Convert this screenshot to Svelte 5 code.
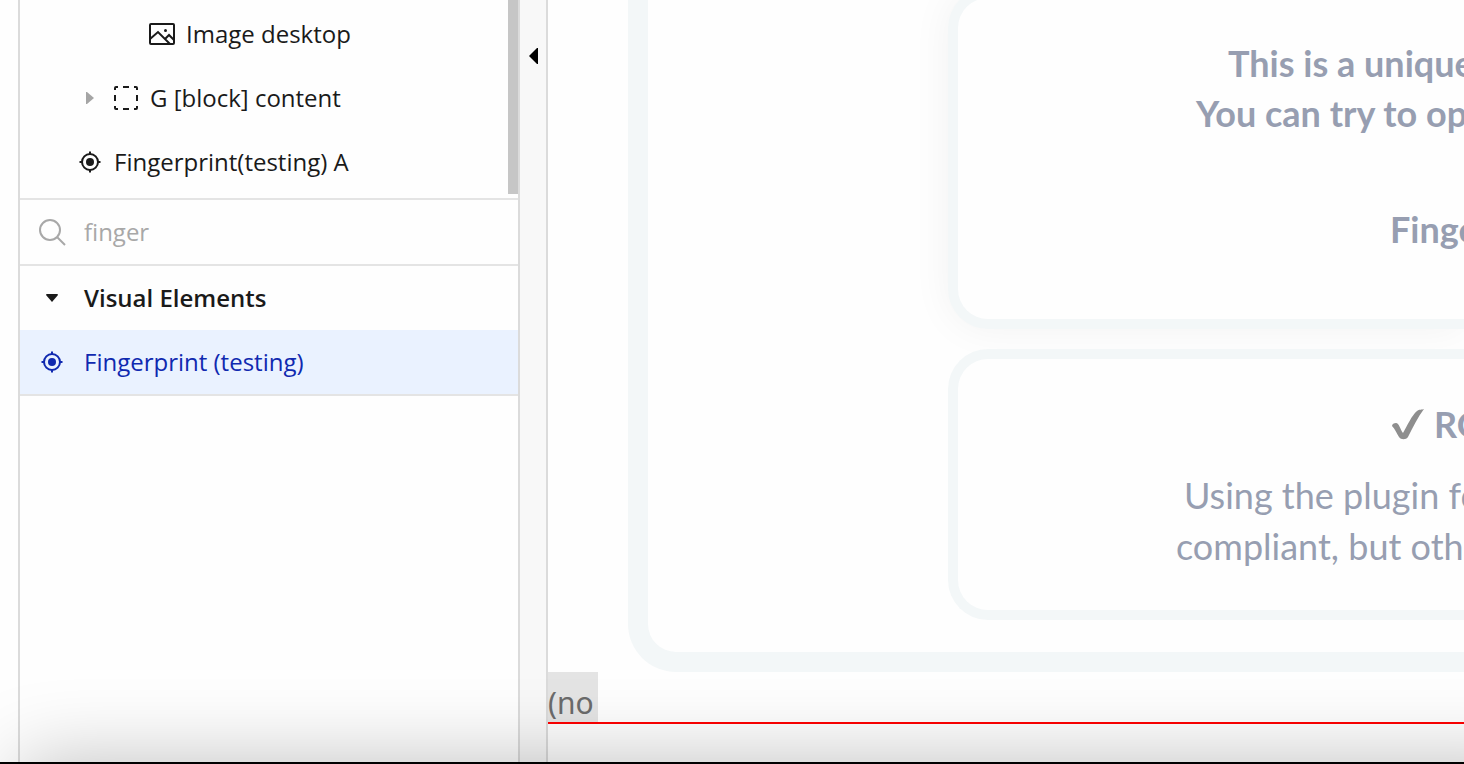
<script lang="ts">
	let query = $state('finger');
	let groupOpen = $state(true);

	// left inset of each line inside a card, in px
	const uniqueCard = [
		{ text: 'This is a unique', indent: 270 },
		{ text: 'You can try to op', indent: 238 }
	];
	const gdprCard = [
		{ text: 'Using the plugin fo', indent: 226 },
		{ text: 'compliant, but othe', indent: 218 }
	];
</script>

{#snippet target()}
	<svg class="icon" viewBox="0 0 24 24" width="24" height="24" aria-hidden="true">
		<circle cx="12" cy="12" r="8" fill="none" stroke="currentColor" stroke-width="2" />
		<circle cx="12" cy="12" r="4" fill="currentColor" />
		<path d="M12 1.500v3M12 19.500v3M1.500 12h3M19.500 12h3" stroke="currentColor" stroke-width="2" />
	</svg>
{/snippet}

<div class="builder">
	<aside class="panel">
		<div class="tree">
			<button class="row level-three">
				<svg class="icon" viewBox="0 0 28 24" width="28" height="24" aria-hidden="true">
					<g fill="none" stroke="currentColor" stroke-width="2">
						<rect x="2" y="2" width="24" height="20" rx="1" />
						<path d="M2 17l8-7 12 12M17 17l4-4 5 5" />
					</g>
					<circle cx="17.500" cy="8.500" r="1.500" fill="currentColor" />
				</svg>
				<span>Image desktop</span>
			</button>
			<button class="row level-two">
				<svg class="caret" viewBox="0 0 8 12" width="8" height="12" aria-hidden="true">
					<path d="M0 0h1l7 6-7 6H0z" fill="#a5a5a5" />
				</svg>
				<svg class="icon" viewBox="0 0 24 24" width="24" height="24" aria-hidden="true">
					<path
						d="M1 4V2q0-1 1-1h2M9 1h6M20 1h2q1 0 1 1v2M23 9v6M23 20v2q0 1-1 1h-2M15 23H9M4 23H2q-1 0-1-1v-2M1 15V9"
						fill="none"
						stroke="currentColor"
						stroke-width="2"
					/>
				</svg>
				<span>G [block] content</span>
			</button>
			<button class="row level-one">
				{@render target()}
				<span>Fingerprint(testing) A</span>
			</button>
			<div class="scrollbar"></div>
		</div>

		<label class="search">
			<svg class="icon" viewBox="0 0 28 28" width="28" height="28" aria-hidden="true">
				<g fill="none" stroke="currentColor" stroke-width="2">
					<circle cx="12" cy="12" r="10" />
					<path d="M19 19l8 8" />
				</g>
			</svg>
			<input type="text" aria-label="Search elements" bind:value={query} />
		</label>

		<div class="group">
			<button class="entry title" onclick={() => (groupOpen = !groupOpen)}>
				<svg class="icon" viewBox="0 0 12 8" width="12" height="8" aria-hidden="true">
					<path d="M0 1q0-1 1-1h10q1 0 1 1L6 8z" fill="currentColor" />
				</svg>
				<span>Visual Elements</span>
			</button>
			{#if groupOpen}
				<button class="entry selected">
					{@render target()}
					<span>Fingerprint (testing)</span>
				</button>
			{/if}
		</div>
	</aside>

	<div class="gutter">
		<button class="collapse" aria-label="Collapse panel">
			<svg viewBox="0 0 9 16" width="9" height="16" aria-hidden="true">
				<path d="M9 0v16H8L0 8l8-8z" fill="#000" />
			</svg>
		</button>
	</div>

	<main class="canvas">
		<section class="frame">
			<article class="card raised">
				{#each uniqueCard as line}
					<p style:padding-left="{line.indent}px">{line.text}</p>
				{/each}
				<p class="finger">Finge</p>
			</article>
			<article class="card">
				<h2>
					<svg class="icon" viewBox="0 0 32 32" width="32" height="32" aria-hidden="true">
						<path
							d="M0 17c0-2 2-3 4-3 3 0 4 6 7 10C15 17 20 6 25 2c2-2 5-1 7-2-6 8-11 18-16 28-2 3-7 3-9 0C5 25 3 20 0 17z"
							fill="#8e8e8e"
						/>
					</svg>
					RO
				</h2>
				{#each gdprCard as line}
					<p style:padding-left="{line.indent}px">{line.text}</p>
				{/each}
			</article>
		</section>
		<div class="note"><span>(no</span></div>
	</main>

	<footer class="dock"></footer>
</div>

<style>
	:global(body) {
		overflow: hidden;
		background: #fff;
	}

	.builder {
		position: relative;
		display: flex;
		height: 100vh;
		padding-left: 18px;
		box-sizing: border-box;
		overflow: hidden;
		background: #fefefe;
		color: #1a1a1a;
		font-family: 'Open Sans', sans-serif;
		font-size: 24px;
		line-height: 32px;
	}

	button {
		border: 0;
		padding: 0;
		background: none;
		color: inherit;
		font: inherit;
		text-align: left;
		cursor: pointer;
	}

	.panel {
		flex: 0 0 498px;
		border: solid #dbdbdb;
		border-width: 0 2px;
	}

	.tree {
		position: relative;
		padding: 2px 0 4px;
		border-bottom: 2px solid #e4e4e4;
	}

	.row {
		display: flex;
		align-items: center;
		gap: 12px;
		width: 100%;
		height: 64px;
	}

	.level-one {
		padding-left: 58px;
	}

	.level-two {
		padding-left: 66px;
	}

	.level-two .caret {
		margin-right: 8px;
	}

	.level-three {
		gap: 10px;
		padding-left: 128px;
	}

	.icon {
		flex: none;
	}

	.scrollbar {
		position: absolute;
		top: 0;
		right: 0;
		bottom: 4px;
		width: 10px;
		background: #c6c6c6;
	}

	.search {
		display: flex;
		align-items: center;
		gap: 18px;
		height: 64px;
		padding-left: 18px;
		border-bottom: 2px solid #e4e4e4;
		color: #a8a8a8;
	}

	.search input {
		flex: 1;
		min-width: 0;
		border: 0;
		padding: 0;
		outline: none;
		background: none;
		color: inherit;
		font: inherit;
	}

	.group {
		border-bottom: 2px solid #e4e4e4;
	}

	.entry {
		display: grid;
		grid-template-columns: 24px 1fr;
		align-items: center;
		gap: 20px;
		width: 100%;
		height: 64px;
		padding-left: 20px;
	}

	.entry .icon {
		justify-self: center;
	}

	.title {
		font-weight: 600;
	}

	.selected {
		background: #eaf2ff;
		color: #1029b0;
	}

	.gutter {
		flex: 0 0 26px;
		border-right: 2px solid #dbdbdb;
		background: #f8f8f8;
	}

	.collapse {
		display: flex;
		align-items: center;
		justify-content: center;
		width: 100%;
		height: 112px;
	}

	.canvas {
		flex: 1;
		min-width: 0;
		overflow: hidden;
		white-space: nowrap;
	}

	.frame {
		margin: -44px 0 0 80px;
		padding: 32px 0 32px 300px;
		border: 20px solid #f3f7f8;
		border-width: 0 0 20px 20px;
		border-radius: 0 0 0 48px;
		color: #979eb1;
		font-family: Lato, sans-serif;
		font-size: 36px;
		line-height: 51px;
	}

	.card {
		border: 10px solid #f3f7f8;
		border-right: 0;
		border-radius: 40px 0 0 40px;
		padding: 40px 0 38px;
		background: #fefefe;
		overflow: hidden;
	}

	.card + .card {
		margin-top: 20px;
	}

	.raised {
		padding-bottom: 65px;
		box-shadow: 0 0 40px rgba(0, 0, 0, 0.05);
		font-weight: 700;
		line-height: 50px;
	}

	.card p,
	.card h2 {
		margin: 0;
	}

	.card .finger {
		margin-top: 66px;
		padding-left: 432px;
	}

	.card h2 {
		display: flex;
		align-items: center;
		gap: 10px;
		margin-bottom: 20px;
		padding-left: 434px;
		font-size: 36px;
		font-weight: 700;
	}

	.note {
		height: 50px;
		border-bottom: 2px solid #ff0000;
		color: #6b6b6b;
		font-family: 'Noto Sans', sans-serif;
		font-size: 30px;
		line-height: 62px;
	}

	.note span {
		display: block;
		width: 50px;
		height: 50px;
		background: #e4e4e4;
	}

	/* bar docked over the bottom edge, its shadow falls on the page */
	.dock {
		position: absolute;
		right: 0;
		bottom: 0;
		left: 0;
		height: 2px;
		background: #000;
		pointer-events: none;
	}

	.dock::before {
		content: '';
		position: absolute;
		top: 0;
		right: -80px;
		left: 20px;
		height: 200px;
		box-shadow: 0 0 80px rgba(0, 0, 0, 0.25);
	}
</style>
